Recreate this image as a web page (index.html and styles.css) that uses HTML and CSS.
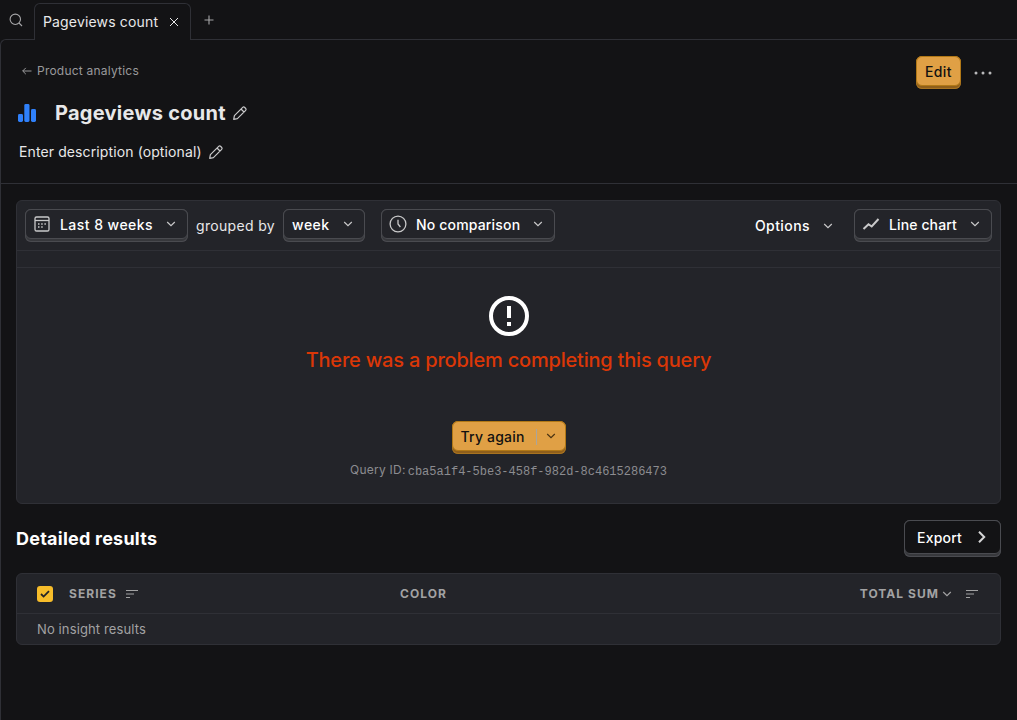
FILE: index.html
```html
<!DOCTYPE html>
<html lang="en">
<head>
<meta charset="utf-8">
<title>Pageviews count</title>
<link rel="stylesheet" href="styles.css">
</head>
<body>
<svg class="defs" width="0" height="0">
  <symbol id="chev" viewBox="0 0 10 10"><path d="M1.2 3 5 6.6 8.8 3" fill="none" stroke="currentColor" stroke-width="1.2"/></symbol>
  <symbol id="pencil" viewBox="0 0 16 16"><path d="M1.7 14.3 2.4 10.6 10.7 2.3a1.3 1.3 0 0 1 1.8 0l1.2 1.2a1.3 1.3 0 0 1 0 1.8L5.4 13.6ZM9 4l3 3" fill="none" stroke="currentColor" stroke-width="1.2" stroke-linejoin="round"/></symbol>
  <symbol id="sort" viewBox="0 0 12 8"><path d="M0 .5h12M0 4h8M0 7.5h4" fill="none" stroke="currentColor" stroke-width="1.2"/></symbol>
</svg>
<header class="tabs">
  <svg class="search" width="14" height="14" viewBox="0 0 14 14"><g fill="none" stroke="currentColor" stroke-width="1.1"><circle cx="6.3" cy="6.3" r="5.2"/><path d="m10 10 3 3"/></g></svg>
  <div class="tab"><span>Pageviews count</span><svg width="10" height="10" viewBox="0 0 10 10"><path d="m1 1 8 8M9 1 1 9" stroke="currentColor" stroke-width="1"/></svg></div>
  <svg class="plus" width="10" height="10" viewBox="0 0 10 10"><path d="M5 .5v9M.5 5h9" stroke="currentColor" stroke-width="1.1"/></svg>
</header>
<main class="scene">
  <section class="head">
    <div class="info">
      <a class="back"><svg width="11" height="10" viewBox="0 0 11 10"><path d="M10.5 5H1.7M4.8 1.9 1.7 5l3.1 3.1" fill="none" stroke="currentColor"/></svg><span>Product analytics</span></a>
      <div class="title">
        <svg width="18" height="18" viewBox="0 0 18 18" fill="#2f80fa"><rect y="10" width="5" height="8" rx="1.4"/><rect x="6.3" width="5.2" height="18" rx="1.4"/><rect x="13" y="5" width="5" height="13" rx="1.4"/></svg>
        <h1>Pageviews count</h1>
        <svg class="pen" width="16" height="16"><use href="#pencil"/></svg>
      </div>
      <div class="desc"><span>Enter description (optional)</span><svg class="pen" width="16" height="16"><use href="#pencil"/></svg></div>
    </div>
    <div class="actions">
      <button class="btn primary edit"><span class="face">Edit</span></button>
      <svg width="18" height="4" viewBox="0 0 18 4" fill="#b9b9ba"><circle cx="2" cy="2" r="1.5"/><circle cx="9" cy="2" r="1.5"/><circle cx="16" cy="2" r="1.5"/></svg>
    </div>
  </section>
  <section class="card">
    <div class="filters">
      <button class="btn range"><span class="face">
        <svg class="ico" width="18" height="18" viewBox="0 0 18 18"><g fill="none" stroke="currentColor" stroke-width="1.3"><rect x="2" y="2" width="14" height="14" rx="1.6"/><path d="M2 5.5h14"/><path stroke-width="1.5" stroke-dasharray="1.5 1.7" d="M8.2 8.9h5M5 12h5"/><path stroke-width="1.5" d="M5 8.9h1.5"/></g></svg>
        <span>Last 8 weeks</span><svg class="chev" width="10" height="10"><use href="#chev"/></svg></span></button>
      <span class="by">grouped by</span>
      <button class="btn week"><span class="face"><span>week</span><svg class="chev" width="10" height="10"><use href="#chev"/></svg></span></button>
      <button class="btn compare"><span class="face">
        <svg class="ico" width="18" height="18" viewBox="0 0 18 18"><g fill="none" stroke="currentColor" stroke-width="1.3"><circle cx="9" cy="9" r="7.9"/><path d="M9 4.8V9l2.4 3"/></g></svg>
        <span>No comparison</span><svg class="chev" width="10" height="10"><use href="#chev"/></svg></span></button>
      <span class="options"><span>Options</span><svg class="chev" width="10" height="10"><use href="#chev"/></svg></span>
      <button class="btn chart"><span class="face">
        <svg class="ico" width="18" height="18" viewBox="0 0 18 18"><path d="m1.5 14 5-4.8 3.2 2.3L16.5 4" fill="none" stroke="currentColor" stroke-width="2"/></svg>
        <span>Line chart</span><svg class="chev" width="10" height="10"><use href="#chev"/></svg></span></button>
    </div>
    <div class="strip"></div>
    <div class="error">
      <svg width="40" height="40" viewBox="0 0 40 40"><circle cx="20" cy="20" r="18" fill="none" stroke="#fff" stroke-width="4"/><path d="M18 10h4v12h-4zM18 26h4v4h-4z" fill="#fff"/></svg>
      <h2>There was a problem completing this query</h2>
      <button class="btn primary retry"><span class="face"><span>Try again</span><i></i><svg class="chev" width="10" height="10"><use href="#chev"/></svg></span></button>
      <p><span>Query ID:</span><code>cba5a1f4-5be3-458f-982d-8c4615286473</code></p>
    </div>
  </section>
  <section class="results">
    <h3>Detailed results</h3>
    <button class="btn export"><span class="face"><span>Export</span><svg width="8" height="12" viewBox="0 0 8 12"><path d="m1 .8 5.2 5.2L1 11.2" fill="none" stroke="#d5d5d6" stroke-width="2"/></svg></span></button>
  </section>
  <section class="table">
    <div class="thead">
      <span class="check"><svg width="10" height="8" viewBox="0 0 10 8"><path d="m1 4 2.6 2.6L9 1.2" fill="none" stroke="#232429" stroke-width="1.8"/></svg></span>
      <span class="series">SERIES</span><svg width="12" height="8"><use href="#sort"/></svg>
      <span class="color">COLOR</span>
      <span class="sum">TOTAL SUM</span><svg class="chev" width="10" height="10"><use href="#chev"/></svg>
      <svg class="last" width="12" height="8"><use href="#sort"/></svg>
    </div>
    <div class="empty">No insight results</div>
  </section>
</main>
</body>
</html>
```
FILE: styles.css
```css
* { box-sizing: border-box; }
body { margin: 0; height: 720px; overflow: hidden; background: #131315; color: #e8e8e9; font: 14px/20px Inter, "Liberation Sans", sans-serif; white-space: nowrap; }
svg { display: block; flex: none; }
h1, h2, h3, p { margin: 0; }
.defs { position: absolute; }

.tabs { display: flex; height: 40px; padding: 3px 0 0 9px; color: #a6a6a8; }
.search { margin-top: 10px; }
.tab { position: relative; z-index: 1; display: flex; align-items: center; justify-content: space-between; width: 157px; height: 37px; margin-left: 11px; padding: 0 11px 0 8px; border: 1px solid #2f3036; border-bottom: 0; border-radius: 6px 6px 0 0; background: #131315; color: #e8e8e9; letter-spacing: .16px; }
.plus { margin: 12px 0 0 13px; }

.scene { height: 681px; margin-top: -1px; border: 1px solid #2f3036; border-width: 1px 0 0 1px; border-top-left-radius: 6px; }
.head { display: flex; justify-content: space-between; height: 144px; padding: 16px 25px 0 16px; border-bottom: 1px solid #2f3036; }
.back { display: flex; align-items: center; gap: 5px; height: 30px; padding-left: 4px; color: #99999b; font-size: 12px; letter-spacing: .22px; }
.title { display: flex; align-items: center; height: 54px; padding-left: 1px; }
h1 { margin: 0 6px 0 19px; font-size: 20px; line-height: 28px; font-weight: 700; letter-spacing: .27px; }
.pen { color: #c9c9ca; }
.desc { display: flex; align-items: center; gap: 6px; height: 24px; padding-left: 2px; letter-spacing: .11px; }
.actions { display: flex; align-items: flex-start; gap: 13px; }
.actions > svg { margin-top: 15px; }

.btn { display: flex; align-items: flex-start; flex: none; height: 33px; padding: 0; border: 0; border-radius: 6px; background: #37383c; box-shadow: inset 0 0 0 1px #4a4b50; color: #fff; font: 500 14px/20px Inter, "Liberation Sans", sans-serif; letter-spacing: .2px; text-align: left; }
.face { display: flex; align-items: center; width: 100%; height: 30px; padding: 1px 11px 0 8px; border: 1px solid #4a4b50; border-radius: 6px; background: #232429; }
.face .chev { margin: -2px 0 0 auto; }
.chev, .ico { color: #c9c9ca; }
.ico { margin: -2px 9px 0 -1px; }
.primary { background: #8f5f1b; box-shadow: inset 0 0 0 1px #a87320; color: #111; }
.primary .face { border-color: #b17816; background: #e0a045; }
.primary .chev { color: #4a3313; }
.edit { width: 45px; letter-spacing: .35px; }

.card { width: 985px; height: 304px; margin: 16px 0 0 15px; border: 1px solid #2f3036; border-radius: 6px; background: #232429; }
.filters { display: flex; height: 50px; padding: 8px 8px 0; border-bottom: 1px solid #2f3036; }
.range { width: 163px; letter-spacing: .45px; }
.by { width: 79px; margin: 7px 8px 0; letter-spacing: .33px; }
.week { width: 82px; letter-spacing: .5px; }
.compare { width: 174px; margin-left: 16px; letter-spacing: .17px; }
.options { display: flex; align-items: center; gap: 13px; height: 34px; margin: 0 21px 0 auto; color: #fff; font-weight: 500; letter-spacing: .42px; }
.chart { width: 138px; letter-spacing: .12px; }
.strip { height: 17px; border-bottom: 1px solid #2f3036; }
.error { display: flex; flex-direction: column; align-items: center; padding-top: 28px; }
h2 { margin-top: 10px; color: #db3707; font-size: 20px; line-height: 28px; font-weight: 500; letter-spacing: -.2px; }
.retry { width: 114px; margin-top: 47px; }
.retry i { width: 1px; height: 16px; margin-left: 11px; background: #aaa59c; }
.retry .face { padding-right: 9px; }
.error p { display: flex; align-items: flex-start; gap: 2px; margin-top: 6px; color: #8c8c90; font-size: 12px; letter-spacing: .25px; }
code { padding-top: 2px; font: 12px/20px "Liberation Mono", monospace; letter-spacing: 0; }

.results { display: flex; justify-content: space-between; width: 985px; margin: 16px 0 0 15px; }
h3 { margin-top: 5px; color: #fff; font-size: 18px; line-height: 28px; font-weight: 700; letter-spacing: .23px; }
.export { width: 97px; height: 37px; }
.export .face { height: 34px; padding: 1px 14px 0 12px; justify-content: space-between; background: #131315; }
.export svg { margin-top: -2px; }
.table { width: 985px; height: 72px; margin: 16px 0 0 15px; border: 1px solid #2f3036; border-radius: 6px; background: #232429; color: #a2a2a3; }
.thead { display: flex; align-items: center; height: 40px; padding: 0 22px 0 20px; border-bottom: 1px solid #2f3036; font-size: 12px; font-weight: 700; letter-spacing: 1.05px; }
.check { display: grid; place-items: center; width: 16px; height: 16px; border-radius: 3px; background: #f7bd2a; }
.series { width: 57px; margin-left: 16px; }
.color { margin-left: 262px; }
.sum { margin-left: auto; }
.thead .chev { margin-left: 3px; color: #a2a2a3; }
.last { margin-left: 14px; }
.empty { padding: 6px 20px; font-size: 13px; line-height: 19px; letter-spacing: .12px; }
```
